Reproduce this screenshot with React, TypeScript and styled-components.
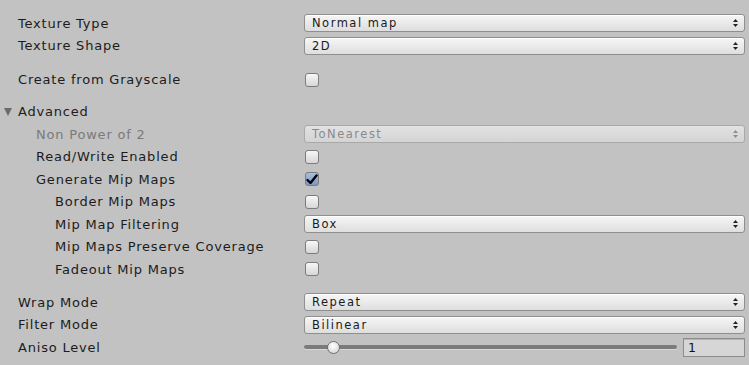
import React from "react";
import styled, { createGlobalStyle, css } from "styled-components";

const GlobalStyle = createGlobalStyle`
    html, body {
        margin: 0;
        padding: 0;
        background: #c2c2c2;
    }
    body {
        font-family: "DejaVu Sans", Verdana, sans-serif;
        -webkit-font-smoothing: antialiased;
    }
`;

const Inspector = styled.div`
    width: 749px;
    height: 365px;
    padding-top: 12px;
    box-sizing: border-box;
    background: #c2c2c2;
    overflow: hidden;
`;

const Row = styled.div`
    display: flex;
    align-items: center;
    height: 22.5px;
`;

const Spacer = styled.div<{ $size: number }>`
    height: ${(p) => p.$size}px;
`;

const Label = styled.div<{ $indent: number; $disabled?: boolean }>`
    position: relative;
    width: 304px;
    flex-shrink: 0;
    box-sizing: border-box;
    padding-left: ${(p) => p.$indent}px;
    font-size: 13px;
    letter-spacing: 0.8px;
    color: ${(p) => (p.$disabled ? "#7a7a7a" : "#1c1c1c")};
    white-space: nowrap;
`;

const FoldArrow = styled.span`
    position: absolute;
    left: 4px;
    top: 50%;
    margin-top: -4px;
    width: 0;
    height: 0;
    border-left: 4.5px solid transparent;
    border-right: 4.5px solid transparent;
    border-top: 8px solid #6b6b6b;
`;

const Control = styled.div`
    flex: 1;
    display: flex;
    align-items: center;
    margin-right: 4px;
`;

const PopupBox = styled.div<{ $disabled?: boolean }>`
    flex: 1;
    height: 18px;
    box-sizing: border-box;
    display: flex;
    align-items: center;
    justify-content: space-between;
    padding: 0 6px 0 7px;
    border: 1px solid #8f8f8f;
    border-radius: 3px;
    background: linear-gradient(#f6f6f6, #dedede);
    box-shadow: inset 0 1px 0 #ffffff;
    font-size: 11.5px;
    letter-spacing: 1.5px;
    color: #1a1a1a;
    ${(p) =>
        p.$disabled &&
        css`
            border-color: #a9a9a9;
            background: linear-gradient(#e2e2e2, #d4d4d4);
            color: #8a8a8a;
            box-shadow: none;
        `}
`;

const Check = styled.div<{ $checked?: boolean }>`
    width: 14px;
    height: 14px;
    margin-left: 1px;
    box-sizing: border-box;
    border: 1px solid #7c7c7c;
    border-radius: 3px;
    background: ${(p) => (p.$checked ? "linear-gradient(#a9bedf, #7e98c4)" : "linear-gradient(#f8f8f8, #d6d6d6)")};
    display: flex;
    align-items: center;
    justify-content: center;
`;

const SliderTrack = styled.div`
    position: relative;
    flex: 1;
    height: 4px;
    margin-right: 6px;
    border-radius: 2px;
    background: #7b7b7b;
    box-shadow: 0 1px 0 #d8d8d8;
`;

const SliderThumb = styled.div`
    position: absolute;
    top: 50%;
    width: 13px;
    height: 13px;
    margin: -6.5px 0 0 -6.5px;
    box-sizing: border-box;
    border-radius: 50%;
    border: 1px solid #6f6f6f;
    background: radial-gradient(circle at 45% 35%, #ffffff, #dcdcdc 70%);
`;

const NumberField = styled.div`
    width: 62px;
    height: 19px;
    box-sizing: border-box;
    display: flex;
    align-items: center;
    padding-left: 4px;
    border: 1px solid #8c8c8c;
    background: #d6d6d6;
    box-shadow: inset 0 1px 0 #b5b5b5;
    font-size: 12.5px;
    color: #111;
`;

const PopupArrows: React.FC<{ color: string }> = ({ color }) => (
    <svg width="5" height="8" viewBox="0 0 5 8">
        <path d="M2.5 0 L5 3 L0 3 Z" fill={color} />
        <path d="M0 5 L5 5 L2.5 8 Z" fill={color} />
    </svg>
);

const Popup: React.FC<{ value: string; disabled?: boolean }> = ({ value, disabled }) => (
    <PopupBox $disabled={disabled}>
        <span>{value}</span>
        <PopupArrows color={disabled ? "#8e8e8e" : "#222"} />
    </PopupBox>
);

const CheckBox: React.FC<{ checked?: boolean }> = ({ checked }) => (
    <Check $checked={checked}>
        {checked && (
            <svg width="12" height="11" viewBox="0 0 12 11">
                <path d="M1.5 6 L4.5 9 L10.5 1.5" fill="none" stroke="#000" strokeWidth="2.4" strokeLinecap="round" strokeLinejoin="round" />
            </svg>
        )}
    </Check>
);

const Field: React.FC<{ label: string; indent?: number; disabled?: boolean; children?: React.ReactNode }> = ({
    label,
    indent = 18,
    disabled,
    children,
}) => (
    <Row>
        <Label $indent={indent} $disabled={disabled}>
            {label}
        </Label>
        <Control>{children}</Control>
    </Row>
);

const App: React.FC = () => {
    const anisoLevel = 1;
    const anisoPercent = ((anisoLevel - 0) / 16) * 100 + 1.6;

    return (
        <>
            <GlobalStyle />
            <Inspector>
                <Field label="Texture Type">
                    <Popup value="Normal map" />
                </Field>
                <Field label="Texture Shape">
                    <Popup value="2D" />
                </Field>
                <Spacer $size={11.5} />
                <Field label="Create from Grayscale">
                    <CheckBox />
                </Field>
                <Spacer $size={9.5} />
                <Row>
                    <Label $indent={18}>
                        <FoldArrow />
                        Advanced
                    </Label>
                </Row>
                <Field label="Non Power of 2" indent={36} disabled>
                    <Popup value="ToNearest" disabled />
                </Field>
                <Field label="Read/Write Enabled" indent={36}>
                    <CheckBox />
                </Field>
                <Field label="Generate Mip Maps" indent={36}>
                    <CheckBox checked />
                </Field>
                <Field label="Border Mip Maps" indent={55}>
                    <CheckBox />
                </Field>
                <Field label="Mip Map Filtering" indent={55}>
                    <Popup value="Box" />
                </Field>
                <Field label="Mip Maps Preserve Coverage" indent={55}>
                    <CheckBox />
                </Field>
                <Field label="Fadeout Mip Maps" indent={55}>
                    <CheckBox />
                </Field>
                <Spacer $size={10.5} />
                <Field label="Wrap Mode">
                    <Popup value="Repeat" />
                </Field>
                <Field label="Filter Mode">
                    <Popup value="Bilinear" />
                </Field>
                <Field label="Aniso Level">
                    <SliderTrack>
                        <SliderThumb style={{ left: `${anisoPercent}%` }} />
                    </SliderTrack>
                    <NumberField>{anisoLevel}</NumberField>
                </Field>
            </Inspector>
        </>
    );
};

export default App;
